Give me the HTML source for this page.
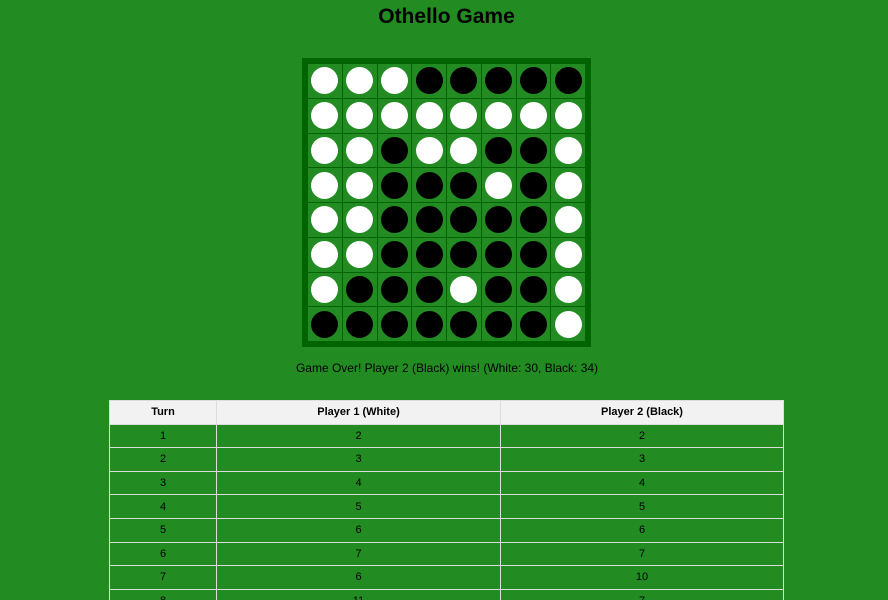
<!DOCTYPE html>
<html><head><style>
html,body{margin:0;width:888px;height:600px;overflow:hidden}
body{background:#228b22;font-family:"Liberation Sans",Arial,sans-serif;position:relative}
h1{position:absolute;top:5px;left:0;width:893px;text-align:center;font-size:21px;margin:0;line-height:24px}
#board{position:absolute;left:302px;top:58px;width:277px;height:277px;border:6px solid #006400;background:#006400;display:grid;grid-template-columns:repeat(8,1fr);grid-template-rows:repeat(8,1fr);gap:1px}
.c{background:#228b22;display:flex;align-items:center;justify-content:center}
.c i{display:block;width:27px;height:27px;border-radius:50%}
.w i{background:#fff}.b i{background:#000}
#msg{position:absolute;top:361px;left:0;width:894px;text-align:center;font-size:12px}
table{position:absolute;left:109px;top:400px;width:675px;border-collapse:collapse;font-size:11px}
td,th{border:1px solid #ddd;height:22.6px;padding:0;text-align:center}
th{background:#f2f2f2}
</style></head><body>
<h1>Othello Game</h1>
<div id="board"></div>
<div id="msg">Game Over! Player 2 (Black) wins! (White: 30, Black: 34)</div>
<table>
<tr><th style="width:106px">Turn</th><th style="width:283px">Player 1 (White)</th><th>Player 2 (Black)</th></tr>
<tr><td>1</td><td>2</td><td>2</td></tr>
<tr><td>2</td><td>3</td><td>3</td></tr>
<tr><td>3</td><td>4</td><td>4</td></tr>
<tr><td>4</td><td>5</td><td>5</td></tr>
<tr><td>5</td><td>6</td><td>6</td></tr>
<tr><td>6</td><td>7</td><td>7</td></tr>
<tr><td>7</td><td>6</td><td>10</td></tr>
<tr><td>8</td><td>11</td><td>7</td></tr>
</table>
<script>
var r=["WWWBBBBB","WWWWWWWW","WWBWWBBW","WWBBBWBW","WWBBBBBW","WWBBBBBW","WBBBWBBW","BBBBBBBW"],h="";
r.forEach(function(s){for(var i=0;i<8;i++)h+='<div class="c '+(s[i]=="W"?"w":"b")+'"><i></i></div>'});
document.getElementById("board").innerHTML=h;
</script>
</body></html>
